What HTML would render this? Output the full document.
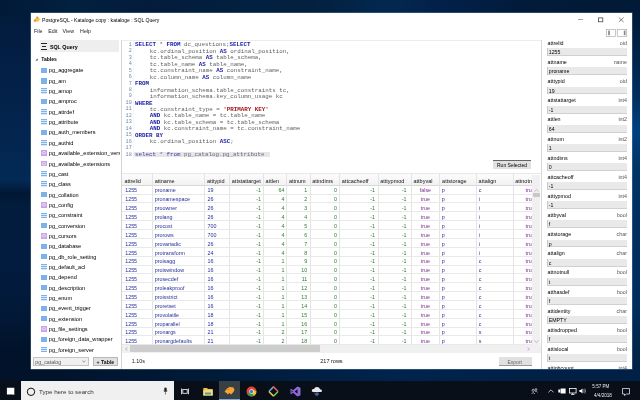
<!DOCTYPE html><html><head><meta charset="utf-8"><style>
html,body{margin:0;padding:0;}
body{width:640px;height:400px;overflow:hidden;position:relative;font-family:'Liberation Sans',sans-serif;}
div{box-sizing:border-box;}
#root{position:absolute;left:0;top:0;width:640px;height:400px;will-change:transform;}
</style></head><body><div id="root">
<div style="position:absolute;left:0;top:0;width:640px;height:381px;background:#021e40"></div>
<div style="position:absolute;left:0;top:0;width:40px;height:381px;background:linear-gradient(180deg,#011a38 0.00%,#031f45 16.27%,#032650 38.32%,#022a55 47.24%,#021f42 49.34%,#011833 50.66%,#021c3c 53.81%,#021c40 67.19%,#021a3a 78.74%,#01132b 92.13%,#01122a 100.00%)"></div>
<div style="position:absolute;left:0;top:0;width:640px;height:16px;background:linear-gradient(90deg,#011a38 0.00%,#02203f 10.94%,#031c3c 23.44%,#02203f 39.06%,#03203f 48.44%,#032850 60.94%,#021f48 70.31%,#011c3a 81.25%,#021a36 93.75%,#021a36 100.00%)"></div>
<div style="position:absolute;left:624px;top:0;width:16px;height:381px;background:linear-gradient(180deg,#001a36 0.00%,#001c3a 5.77%,#00244c 16.27%,#003060 26.25%,#003a75 30.97%,#004080 34.65%,#003a72 38.85%,#003464 44.62%,#00305f 55.64%,#002e5c 79.27%,#002448 92.39%,#002045 100.00%)"></div>
<div style="position:absolute;left:0;top:365px;width:640px;height:16px;background:linear-gradient(90deg,#01122a 0.00%,#01132b 7.81%,#001a38 31.25%,#00244c 62.50%,#002045 85.94%,#002045 100.00%)"></div>
<div style="position:absolute;left:30.5px;top:13.3px;width:601.5px;height:355.7px;background:#fff;box-shadow:0 0 0 0.6px rgba(120,160,200,0.55);"></div>
<svg style="position:absolute;left:32px;top:15px" width="10" height="9" viewBox="32 15 10 9"><path d="M37.3 17.6 L40.8 19.3 L38.5 20.5 Z" fill="#f7cf4a"/><ellipse cx="37.2" cy="19.7" rx="2.1" ry="2.1" fill="#f6c53a"/><circle cx="35" cy="20.6" r="1.3" fill="#e8963a"/><circle cx="37.3" cy="17.4" r="1" fill="#c9864a"/></svg>
<div style="position:absolute;left:42px;top:16.94px;font-size:5.1px;line-height:6.12px;color:#000;font-weight:normal;white-space:pre;">PostgreSQL - Kataloge copy : kataloge : SQL Query</div>
<svg style="position:absolute;left:576px;top:15px" width="50" height="10" viewBox="576 15 50 10"><path d="M578 19.5 L583 19.5" stroke="#666" stroke-width="0.6"/><rect x="598.5" y="17.9" width="4.3" height="3.9" fill="none" stroke="#333" stroke-width="0.7"/><path d="M618.8 17.5 L623.6 22 M623.6 17.5 L618.8 22" stroke="#333" stroke-width="0.6"/></svg>
<div style="position:absolute;left:34px;top:27.82px;font-size:5.3px;line-height:6.36px;color:#222;font-weight:normal;white-space:pre;">File</div>
<div style="position:absolute;left:48.3px;top:27.82px;font-size:5.3px;line-height:6.36px;color:#222;font-weight:normal;white-space:pre;">Edit</div>
<div style="position:absolute;left:62.6px;top:27.82px;font-size:5.3px;line-height:6.36px;color:#222;font-weight:normal;white-space:pre;">View</div>
<div style="position:absolute;left:80.1px;top:27.82px;font-size:5.3px;line-height:6.36px;color:#222;font-weight:normal;white-space:pre;">Help</div>
<svg style="position:absolute;left:600px;top:25px" width="32" height="15" viewBox="600 25 32 15"><rect x="606.5" y="29.5" width="8.8" height="6.8" fill="#fff" stroke="#a0a0a0" stroke-width="0.6"/><rect x="608.2" y="30.6" width="1.7" height="4.6" fill="#888"/><rect x="617.2" y="29.5" width="9.5" height="6.8" fill="#fff" stroke="#a0a0a0" stroke-width="0.6"/><rect x="623.8" y="30.6" width="1.7" height="4.6" fill="#888"/></svg>
<div style="position:absolute;left:40px;top:39.8px;width:79px;height:12.3px;background:#eeeeee;"></div>
<div style="position:absolute;left:40.9px;top:43.2px;width:6.2px;height:0.7px;background:#222;"></div>
<div style="position:absolute;left:42.1px;top:45.8px;width:3.8px;height:0.7px;background:#222;"></div>
<div style="position:absolute;left:40.9px;top:49.1px;width:6.2px;height:0.7px;background:#222;"></div>
<div style="position:absolute;left:49.9px;top:43.69px;font-size:5.35px;line-height:6.42px;color:#000;font-weight:bold;white-space:pre;">SQL Query</div>
<svg style="position:absolute;left:35px;top:58px" width="3" height="3" viewBox="0 0 3 3"><path d="M2.6 0.4 L2.6 2.6 L0.4 2.6 Z" fill="#333"/></svg>
<div style="position:absolute;left:41.2px;top:56.27px;font-size:5.05px;line-height:6.06px;color:#000;font-weight:bold;white-space:pre;">Tables</div>
<div style="position:absolute;left:0;top:0;width:640px;height:400px;clip-path:inset(62px 520px 46px 31px)">
<div style="position:absolute;left:41.2px;top:67.75px;width:5.6px;height:5.5px;background:#7cb2ec;"></div>
<div style="position:absolute;left:48.8px;top:67.44px;font-size:5.6px;line-height:6.72px;color:#000;font-weight:normal;white-space:pre;">pg_aggregate</div>
<div style="position:absolute;left:41.2px;top:78.09px;width:5.6px;height:5.5px;background:#7cb2ec;"></div>
<div style="position:absolute;left:48.8px;top:77.78px;font-size:5.6px;line-height:6.72px;color:#000;font-weight:normal;white-space:pre;">pg_am</div>
<div style="position:absolute;left:41.2px;top:88.43px;width:5.6px;height:5.5px;background:repeating-linear-gradient(180deg,#7cb2ec 0,#7cb2ec 1.1px,#dbe9f8 1.1px,#dbe9f8 1.85px);"></div>
<div style="position:absolute;left:48.8px;top:88.12px;font-size:5.6px;line-height:6.72px;color:#000;font-weight:normal;white-space:pre;">pg_amop</div>
<div style="position:absolute;left:41.2px;top:98.77px;width:5.6px;height:5.5px;background:#7cb2ec;"></div>
<div style="position:absolute;left:48.8px;top:98.46px;font-size:5.6px;line-height:6.72px;color:#000;font-weight:normal;white-space:pre;">pg_amproc</div>
<div style="position:absolute;left:41.2px;top:109.11px;width:5.6px;height:5.5px;background:repeating-linear-gradient(180deg,#7cb2ec 0,#7cb2ec 1.1px,#dbe9f8 1.1px,#dbe9f8 1.85px);"></div>
<div style="position:absolute;left:48.8px;top:108.80px;font-size:5.6px;line-height:6.72px;color:#000;font-weight:normal;white-space:pre;">pg_attrdef</div>
<div style="position:absolute;left:41.2px;top:119.45px;width:5.6px;height:5.5px;background:repeating-linear-gradient(180deg,#7cb2ec 0,#7cb2ec 1.1px,#dbe9f8 1.1px,#dbe9f8 1.85px);"></div>
<div style="position:absolute;left:48.8px;top:119.14px;font-size:5.6px;line-height:6.72px;color:#000;font-weight:normal;white-space:pre;">pg_attribute</div>
<div style="position:absolute;left:41.2px;top:129.79px;width:5.6px;height:5.5px;background:#7cb2ec;"></div>
<div style="position:absolute;left:48.8px;top:129.48px;font-size:5.6px;line-height:6.72px;color:#000;font-weight:normal;white-space:pre;">pg_auth_members</div>
<div style="position:absolute;left:41.2px;top:140.13px;width:5.6px;height:5.5px;background:repeating-linear-gradient(180deg,#7cb2ec 0,#7cb2ec 1.1px,#dbe9f8 1.1px,#dbe9f8 1.85px);"></div>
<div style="position:absolute;left:48.8px;top:139.82px;font-size:5.6px;line-height:6.72px;color:#000;font-weight:normal;white-space:pre;">pg_authid</div>
<div style="position:absolute;left:41.2px;top:150.47px;width:5.6px;height:5.5px;background:#c7a4e8;"></div>
<svg style="position:absolute;left:41.2px;top:150.47px" width="5.6" height="5.5" viewBox="0 0 5.6 5.5"><ellipse cx="2.8" cy="2.75" rx="1.8" ry="1.2" fill="none" stroke="#fff" stroke-width="0.6"/></svg>
<div style="position:absolute;left:48.8px;top:150.16px;font-size:5.6px;line-height:6.72px;color:#000;font-weight:normal;white-space:pre;">pg_available_extension_versions</div>
<div style="position:absolute;left:41.2px;top:160.81px;width:5.6px;height:5.5px;background:#c7a4e8;"></div>
<svg style="position:absolute;left:41.2px;top:160.81px" width="5.6" height="5.5" viewBox="0 0 5.6 5.5"><ellipse cx="2.8" cy="2.75" rx="1.8" ry="1.2" fill="none" stroke="#fff" stroke-width="0.6"/></svg>
<div style="position:absolute;left:48.8px;top:160.50px;font-size:5.6px;line-height:6.72px;color:#000;font-weight:normal;white-space:pre;">pg_available_extensions</div>
<div style="position:absolute;left:41.2px;top:171.15px;width:5.6px;height:5.5px;background:repeating-linear-gradient(180deg,#7cb2ec 0,#7cb2ec 1.1px,#dbe9f8 1.1px,#dbe9f8 1.85px);"></div>
<div style="position:absolute;left:48.8px;top:170.84px;font-size:5.6px;line-height:6.72px;color:#000;font-weight:normal;white-space:pre;">pg_cast</div>
<div style="position:absolute;left:41.2px;top:181.49px;width:5.6px;height:5.5px;background:repeating-linear-gradient(180deg,#7cb2ec 0,#7cb2ec 1.1px,#dbe9f8 1.1px,#dbe9f8 1.85px);"></div>
<div style="position:absolute;left:48.8px;top:181.18px;font-size:5.6px;line-height:6.72px;color:#000;font-weight:normal;white-space:pre;">pg_class</div>
<div style="position:absolute;left:41.2px;top:191.82999999999998px;width:5.6px;height:5.5px;background:#7cb2ec;"></div>
<div style="position:absolute;left:48.8px;top:191.52px;font-size:5.6px;line-height:6.72px;color:#000;font-weight:normal;white-space:pre;">pg_collation</div>
<div style="position:absolute;left:41.2px;top:202.17px;width:5.6px;height:5.5px;background:#c7a4e8;"></div>
<svg style="position:absolute;left:41.2px;top:202.17px" width="5.6" height="5.5" viewBox="0 0 5.6 5.5"><ellipse cx="2.8" cy="2.75" rx="1.8" ry="1.2" fill="none" stroke="#fff" stroke-width="0.6"/></svg>
<div style="position:absolute;left:48.8px;top:201.86px;font-size:5.6px;line-height:6.72px;color:#000;font-weight:normal;white-space:pre;">pg_config</div>
<div style="position:absolute;left:41.2px;top:212.51px;width:5.6px;height:5.5px;background:repeating-linear-gradient(180deg,#7cb2ec 0,#7cb2ec 1.1px,#dbe9f8 1.1px,#dbe9f8 1.85px);"></div>
<div style="position:absolute;left:48.8px;top:212.20px;font-size:5.6px;line-height:6.72px;color:#000;font-weight:normal;white-space:pre;">pg_constraint</div>
<div style="position:absolute;left:41.2px;top:222.85px;width:5.6px;height:5.5px;background:#7cb2ec;"></div>
<div style="position:absolute;left:48.8px;top:222.54px;font-size:5.6px;line-height:6.72px;color:#000;font-weight:normal;white-space:pre;">pg_conversion</div>
<div style="position:absolute;left:41.2px;top:233.19px;width:5.6px;height:5.5px;background:#c7a4e8;"></div>
<svg style="position:absolute;left:41.2px;top:233.19px" width="5.6" height="5.5" viewBox="0 0 5.6 5.5"><ellipse cx="2.8" cy="2.75" rx="1.8" ry="1.2" fill="none" stroke="#fff" stroke-width="0.6"/></svg>
<div style="position:absolute;left:48.8px;top:232.88px;font-size:5.6px;line-height:6.72px;color:#000;font-weight:normal;white-space:pre;">pg_cursors</div>
<div style="position:absolute;left:41.2px;top:243.53px;width:5.6px;height:5.5px;background:#7cb2ec;"></div>
<div style="position:absolute;left:48.8px;top:243.22px;font-size:5.6px;line-height:6.72px;color:#000;font-weight:normal;white-space:pre;">pg_database</div>
<div style="position:absolute;left:41.2px;top:253.87px;width:5.6px;height:5.5px;background:#7cb2ec;"></div>
<div style="position:absolute;left:48.8px;top:253.56px;font-size:5.6px;line-height:6.72px;color:#000;font-weight:normal;white-space:pre;">pg_db_role_setting</div>
<div style="position:absolute;left:41.2px;top:264.21000000000004px;width:5.6px;height:5.5px;background:repeating-linear-gradient(180deg,#7cb2ec 0,#7cb2ec 1.1px,#dbe9f8 1.1px,#dbe9f8 1.85px);"></div>
<div style="position:absolute;left:48.8px;top:263.90px;font-size:5.6px;line-height:6.72px;color:#000;font-weight:normal;white-space:pre;">pg_default_acl</div>
<div style="position:absolute;left:41.2px;top:274.55px;width:5.6px;height:5.5px;background:#7cb2ec;"></div>
<div style="position:absolute;left:48.8px;top:274.24px;font-size:5.6px;line-height:6.72px;color:#000;font-weight:normal;white-space:pre;">pg_depend</div>
<div style="position:absolute;left:41.2px;top:284.89px;width:5.6px;height:5.5px;background:#7cb2ec;"></div>
<div style="position:absolute;left:48.8px;top:284.58px;font-size:5.6px;line-height:6.72px;color:#000;font-weight:normal;white-space:pre;">pg_description</div>
<div style="position:absolute;left:41.2px;top:295.23px;width:5.6px;height:5.5px;background:repeating-linear-gradient(180deg,#7cb2ec 0,#7cb2ec 1.1px,#dbe9f8 1.1px,#dbe9f8 1.85px);"></div>
<div style="position:absolute;left:48.8px;top:294.92px;font-size:5.6px;line-height:6.72px;color:#000;font-weight:normal;white-space:pre;">pg_enum</div>
<div style="position:absolute;left:41.2px;top:305.57px;width:5.6px;height:5.5px;background:#7cb2ec;"></div>
<div style="position:absolute;left:48.8px;top:305.26px;font-size:5.6px;line-height:6.72px;color:#000;font-weight:normal;white-space:pre;">pg_event_trigger</div>
<div style="position:absolute;left:41.2px;top:315.90999999999997px;width:5.6px;height:5.5px;background:#7cb2ec;"></div>
<div style="position:absolute;left:48.8px;top:315.60px;font-size:5.6px;line-height:6.72px;color:#000;font-weight:normal;white-space:pre;">pg_extension</div>
<div style="position:absolute;left:41.2px;top:326.25px;width:5.6px;height:5.5px;background:#c7a4e8;"></div>
<svg style="position:absolute;left:41.2px;top:326.25px" width="5.6" height="5.5" viewBox="0 0 5.6 5.5"><ellipse cx="2.8" cy="2.75" rx="1.8" ry="1.2" fill="none" stroke="#fff" stroke-width="0.6"/></svg>
<div style="position:absolute;left:48.8px;top:325.94px;font-size:5.6px;line-height:6.72px;color:#000;font-weight:normal;white-space:pre;">pg_file_settings</div>
<div style="position:absolute;left:41.2px;top:336.59px;width:5.6px;height:5.5px;background:#7cb2ec;"></div>
<div style="position:absolute;left:48.8px;top:336.28px;font-size:5.6px;line-height:6.72px;color:#000;font-weight:normal;white-space:pre;">pg_foreign_data_wrapper</div>
<div style="position:absolute;left:41.2px;top:346.93px;width:5.6px;height:5.5px;background:repeating-linear-gradient(180deg,#7cb2ec 0,#7cb2ec 1.1px,#dbe9f8 1.1px,#dbe9f8 1.85px);"></div>
<div style="position:absolute;left:48.8px;top:346.62px;font-size:5.6px;line-height:6.72px;color:#000;font-weight:normal;white-space:pre;">pg_foreign_server</div>
</div>
<div style="position:absolute;left:33.2px;top:357.4px;width:55.5px;height:8.4px;border:0.7px solid #c4c4c4;background:#f0f0f0;"></div>
<div style="position:absolute;left:35.3px;top:358.82px;font-size:5.3px;line-height:6.36px;color:#555;font-weight:normal;white-space:pre;">pg_catalog</div>
<svg style="position:absolute;left:82px;top:359.8px" width="4" height="3" viewBox="0 0 4 3"><path d="M0.4 0.6 L2 2.2 L3.6 0.6" fill="none" stroke="#555" stroke-width="0.6"/></svg>
<div style="position:absolute;left:93.2px;top:357.4px;width:24.5px;height:8.4px;border:0.7px solid #b8b8b8;background:#e1e1e1;"></div>
<div style="position:absolute;left:96.6px;top:358.68px;font-size:5.2px;line-height:6.24px;color:#111;font-weight:bold;white-space:pre;">+ Table</div>
<div style="position:absolute;left:121.2px;top:39.5px;width:0.8px;height:329.5px;background:#d4d4d4;"></div>
<div style="position:absolute;left:122px;top:39.5px;width:419px;height:0.7px;background:#ececec;"></div>
<div style="position:absolute;left:541px;top:39.5px;width:0.8px;height:329.5px;background:#d8d8d8;"></div>
<div style="position:absolute;left:133.2px;top:40px;width:0.5px;height:120px;background:#f6f7fb;"></div>
<div style="position:absolute;right:508.2px;top:41.68px;font-size:5.2px;line-height:6.24px;color:#6f8aa8;font-weight:normal;white-space:pre;font-family:'Liberation Mono',monospace;">1</div>
<div style="position:absolute;left:135px;top:41.30px;font-size:5.833px;line-height:7.00px;color:#606060;white-space:pre;font-family:'Liberation Mono',monospace;"><span style="color:#1a1aa6;font-weight:bold">SELECT</span> * <span style="color:#1a1aa6;font-weight:bold">FROM</span> dc_questions;<span style="color:#1a1aa6;font-weight:bold">SELECT</span></div>
<div style="position:absolute;right:508.2px;top:48.15px;font-size:5.2px;line-height:6.24px;color:#6f8aa8;font-weight:normal;white-space:pre;font-family:'Liberation Mono',monospace;">2</div>
<div style="position:absolute;left:135px;top:47.77px;font-size:5.833px;line-height:7.00px;color:#606060;white-space:pre;font-family:'Liberation Mono',monospace;"><span style="display:inline-block;width:14.8px"></span>kc.ordinal_position <span style="color:#1a1aa6;font-weight:bold">AS</span> ordinal_position,</div>
<div style="position:absolute;right:508.2px;top:54.62px;font-size:5.2px;line-height:6.24px;color:#6f8aa8;font-weight:normal;white-space:pre;font-family:'Liberation Mono',monospace;">3</div>
<div style="position:absolute;left:135px;top:54.24px;font-size:5.833px;line-height:7.00px;color:#606060;white-space:pre;font-family:'Liberation Mono',monospace;"><span style="display:inline-block;width:14.8px"></span>tc.table_schema <span style="color:#1a1aa6;font-weight:bold">AS</span> table_schema,</div>
<div style="position:absolute;right:508.2px;top:61.09px;font-size:5.2px;line-height:6.24px;color:#6f8aa8;font-weight:normal;white-space:pre;font-family:'Liberation Mono',monospace;">4</div>
<div style="position:absolute;left:135px;top:60.71px;font-size:5.833px;line-height:7.00px;color:#606060;white-space:pre;font-family:'Liberation Mono',monospace;"><span style="display:inline-block;width:14.8px"></span>tc.table_name <span style="color:#1a1aa6;font-weight:bold">AS</span> table_name,</div>
<div style="position:absolute;right:508.2px;top:67.56px;font-size:5.2px;line-height:6.24px;color:#6f8aa8;font-weight:normal;white-space:pre;font-family:'Liberation Mono',monospace;">5</div>
<div style="position:absolute;left:135px;top:67.18px;font-size:5.833px;line-height:7.00px;color:#606060;white-space:pre;font-family:'Liberation Mono',monospace;"><span style="display:inline-block;width:14.8px"></span>tc.constraint_name <span style="color:#1a1aa6;font-weight:bold">AS</span> constraint_name,</div>
<div style="position:absolute;right:508.2px;top:74.03px;font-size:5.2px;line-height:6.24px;color:#6f8aa8;font-weight:normal;white-space:pre;font-family:'Liberation Mono',monospace;">6</div>
<div style="position:absolute;left:135px;top:73.65px;font-size:5.833px;line-height:7.00px;color:#606060;white-space:pre;font-family:'Liberation Mono',monospace;"><span style="display:inline-block;width:14.8px"></span>kc.column_name <span style="color:#1a1aa6;font-weight:bold">AS</span> column_name</div>
<div style="position:absolute;right:508.2px;top:80.50px;font-size:5.2px;line-height:6.24px;color:#6f8aa8;font-weight:normal;white-space:pre;font-family:'Liberation Mono',monospace;">7</div>
<div style="position:absolute;left:135px;top:80.12px;font-size:5.833px;line-height:7.00px;color:#606060;white-space:pre;font-family:'Liberation Mono',monospace;"><span style="color:#1a1aa6;font-weight:bold">FROM</span></div>
<div style="position:absolute;right:508.2px;top:86.97px;font-size:5.2px;line-height:6.24px;color:#6f8aa8;font-weight:normal;white-space:pre;font-family:'Liberation Mono',monospace;">8</div>
<div style="position:absolute;left:135px;top:86.59px;font-size:5.833px;line-height:7.00px;color:#606060;white-space:pre;font-family:'Liberation Mono',monospace;"><span style="display:inline-block;width:14.8px"></span>information_schema.table_constraints tc,</div>
<div style="position:absolute;right:508.2px;top:93.44px;font-size:5.2px;line-height:6.24px;color:#6f8aa8;font-weight:normal;white-space:pre;font-family:'Liberation Mono',monospace;">9</div>
<div style="position:absolute;left:135px;top:93.06px;font-size:5.833px;line-height:7.00px;color:#606060;white-space:pre;font-family:'Liberation Mono',monospace;"><span style="display:inline-block;width:14.8px"></span>information_schema.key_column_usage kc</div>
<div style="position:absolute;right:508.2px;top:99.91px;font-size:5.2px;line-height:6.24px;color:#6f8aa8;font-weight:normal;white-space:pre;font-family:'Liberation Mono',monospace;">10</div>
<div style="position:absolute;left:135px;top:99.53px;font-size:5.833px;line-height:7.00px;color:#606060;white-space:pre;font-family:'Liberation Mono',monospace;"><span style="color:#1a1aa6;font-weight:bold">WHERE</span></div>
<div style="position:absolute;right:508.2px;top:106.38px;font-size:5.2px;line-height:6.24px;color:#6f8aa8;font-weight:normal;white-space:pre;font-family:'Liberation Mono',monospace;">11</div>
<div style="position:absolute;left:135px;top:106.00px;font-size:5.833px;line-height:7.00px;color:#606060;white-space:pre;font-family:'Liberation Mono',monospace;"><span style="display:inline-block;width:14.8px"></span>tc.constraint_type = <span style="color:#a31515;font-weight:bold">'PRIMARY KEY'</span></div>
<div style="position:absolute;right:508.2px;top:112.85px;font-size:5.2px;line-height:6.24px;color:#6f8aa8;font-weight:normal;white-space:pre;font-family:'Liberation Mono',monospace;">12</div>
<div style="position:absolute;left:135px;top:112.47px;font-size:5.833px;line-height:7.00px;color:#606060;white-space:pre;font-family:'Liberation Mono',monospace;"><span style="display:inline-block;width:14.8px"></span><span style="color:#1a1aa6;font-weight:bold">AND</span> kc.table_name = tc.table_name</div>
<div style="position:absolute;right:508.2px;top:119.32px;font-size:5.2px;line-height:6.24px;color:#6f8aa8;font-weight:normal;white-space:pre;font-family:'Liberation Mono',monospace;">13</div>
<div style="position:absolute;left:135px;top:118.94px;font-size:5.833px;line-height:7.00px;color:#606060;white-space:pre;font-family:'Liberation Mono',monospace;"><span style="display:inline-block;width:14.8px"></span><span style="color:#1a1aa6;font-weight:bold">AND</span> kc.table_schema = tc.table_schema</div>
<div style="position:absolute;right:508.2px;top:125.79px;font-size:5.2px;line-height:6.24px;color:#6f8aa8;font-weight:normal;white-space:pre;font-family:'Liberation Mono',monospace;">14</div>
<div style="position:absolute;left:135px;top:125.41px;font-size:5.833px;line-height:7.00px;color:#606060;white-space:pre;font-family:'Liberation Mono',monospace;"><span style="display:inline-block;width:14.8px"></span><span style="color:#1a1aa6;font-weight:bold">AND</span> kc.constraint_name = tc.constraint_name</div>
<div style="position:absolute;right:508.2px;top:132.26px;font-size:5.2px;line-height:6.24px;color:#6f8aa8;font-weight:normal;white-space:pre;font-family:'Liberation Mono',monospace;">15</div>
<div style="position:absolute;left:135px;top:131.88px;font-size:5.833px;line-height:7.00px;color:#606060;white-space:pre;font-family:'Liberation Mono',monospace;"><span style="color:#1a1aa6;font-weight:bold">ORDER BY</span></div>
<div style="position:absolute;right:508.2px;top:138.73px;font-size:5.2px;line-height:6.24px;color:#6f8aa8;font-weight:normal;white-space:pre;font-family:'Liberation Mono',monospace;">16</div>
<div style="position:absolute;left:135px;top:138.35px;font-size:5.833px;line-height:7.00px;color:#606060;white-space:pre;font-family:'Liberation Mono',monospace;"><span style="display:inline-block;width:14.8px"></span>kc.ordinal_position <span style="color:#1a1aa6;font-weight:bold">ASC</span>;</div>
<div style="position:absolute;right:508.2px;top:145.20px;font-size:5.2px;line-height:6.24px;color:#6f8aa8;font-weight:normal;white-space:pre;font-family:'Liberation Mono',monospace;">17</div>
<div style="position:absolute;right:508.2px;top:151.67px;font-size:5.2px;line-height:6.24px;color:#6f8aa8;font-weight:normal;white-space:pre;font-family:'Liberation Mono',monospace;">18</div>
<div style="position:absolute;left:134.3px;top:151.89px;width:136px;height:5.5px;background:#e6e6e6;"></div>
<div style="position:absolute;left:135px;top:151.29px;font-size:5.833px;line-height:7.00px;color:#606060;white-space:pre;font-family:'Liberation Mono',monospace;"><span style="color:#3a3ab0">select</span><span style="color:#6a6a9a"> * </span><span style="color:#3a3ab0">from</span><span style="color:#6a6a8a"> pg_catalog.pg_attribute</span></div>
<div style="position:absolute;left:493.3px;top:160px;width:37.6px;height:8.6px;background:#e1e1e1;border-top:0.8px solid #666;"></div>
<div style="position:absolute;left:497px;top:162.00px;font-size:5.0px;line-height:6.00px;color:#000;font-weight:normal;white-space:pre;">Run Selected</div>
<div style="position:absolute;left:122px;top:173.2px;width:419px;height:0.7px;background:#e8e8e8;"></div>
<div style="position:absolute;left:122px;top:173.9px;width:410px;height:11.400000000000011px;background:linear-gradient(180deg,#fcfcfc,#f2f2f2);"></div>
<div style="position:absolute;left:122px;top:184.70000000000002px;width:410px;height:0.8px;background:#d8d8d8;"></div>
<div style="position:absolute;left:124.4px;top:177.80px;font-size:5.5px;line-height:6.60px;color:#111;font-weight:normal;white-space:pre;">attrelid</div>
<div style="position:absolute;left:154.70000000000002px;top:177.80px;font-size:5.5px;line-height:6.60px;color:#111;font-weight:normal;white-space:pre;">attname</div>
<div style="position:absolute;left:152.0px;top:174.0px;width:0.7px;height:171.3px;background:#e4e4e4;"></div>
<div style="position:absolute;left:206.9px;top:177.80px;font-size:5.5px;line-height:6.60px;color:#111;font-weight:normal;white-space:pre;">atttypid</div>
<div style="position:absolute;left:204.2px;top:174.0px;width:0.7px;height:171.3px;background:#e4e4e4;"></div>
<div style="position:absolute;left:231.8px;top:177.80px;font-size:5.5px;line-height:6.60px;color:#111;font-weight:normal;white-space:pre;">attstattarget</div>
<div style="position:absolute;left:229.1px;top:174.0px;width:0.7px;height:171.3px;background:#e4e4e4;"></div>
<div style="position:absolute;left:265.59999999999997px;top:177.80px;font-size:5.5px;line-height:6.60px;color:#111;font-weight:normal;white-space:pre;">attlen</div>
<div style="position:absolute;left:262.9px;top:174.0px;width:0.7px;height:171.3px;background:#e4e4e4;"></div>
<div style="position:absolute;left:288.9px;top:177.80px;font-size:5.5px;line-height:6.60px;color:#111;font-weight:normal;white-space:pre;">attnum</div>
<div style="position:absolute;left:286.2px;top:174.0px;width:0.7px;height:171.3px;background:#e4e4e4;"></div>
<div style="position:absolute;left:312.2px;top:177.80px;font-size:5.5px;line-height:6.60px;color:#111;font-weight:normal;white-space:pre;">attndims</div>
<div style="position:absolute;left:309.5px;top:174.0px;width:0.7px;height:171.3px;background:#e4e4e4;"></div>
<div style="position:absolute;left:341.79999999999995px;top:177.80px;font-size:5.5px;line-height:6.60px;color:#111;font-weight:normal;white-space:pre;">attcacheoff</div>
<div style="position:absolute;left:339.09999999999997px;top:174.0px;width:0.7px;height:171.3px;background:#e4e4e4;"></div>
<div style="position:absolute;left:380.2px;top:177.80px;font-size:5.5px;line-height:6.60px;color:#111;font-weight:normal;white-space:pre;">atttypmod</div>
<div style="position:absolute;left:377.5px;top:174.0px;width:0.7px;height:171.3px;background:#e4e4e4;"></div>
<div style="position:absolute;left:413.5px;top:177.80px;font-size:5.5px;line-height:6.60px;color:#111;font-weight:normal;white-space:pre;">attbyval</div>
<div style="position:absolute;left:410.8px;top:174.0px;width:0.7px;height:171.3px;background:#e4e4e4;"></div>
<div style="position:absolute;left:442.09999999999997px;top:177.80px;font-size:5.5px;line-height:6.60px;color:#111;font-weight:normal;white-space:pre;">attstorage</div>
<div style="position:absolute;left:439.4px;top:174.0px;width:0.7px;height:171.3px;background:#e4e4e4;"></div>
<div style="position:absolute;left:478.59999999999997px;top:177.80px;font-size:5.5px;line-height:6.60px;color:#111;font-weight:normal;white-space:pre;">attalign</div>
<div style="position:absolute;left:475.9px;top:174.0px;width:0.7px;height:171.3px;background:#e4e4e4;"></div>
<div style="position:absolute;left:515.1999999999999px;top:177.80px;font-size:5.5px;line-height:6.60px;color:#111;font-weight:normal;white-space:pre;">attnotnull</div>
<div style="position:absolute;left:512.5px;top:174.0px;width:0.7px;height:171.3px;background:#e4e4e4;"></div>
<div style="position:absolute;left:122px;top:193.57000000000002px;width:410px;height:0.7px;background:#e9e9e9;"></div>
<div style="position:absolute;left:125.2px;top:187.47px;font-size:5.35px;line-height:6.42px;color:#26309a;font-weight:normal;white-space:pre;">1255</div>
<div style="position:absolute;left:154.7px;top:187.47px;font-size:5.35px;line-height:6.42px;color:#26309a;font-weight:normal;white-space:pre;">proname</div>
<div style="position:absolute;left:207.6px;top:187.47px;font-size:5.35px;line-height:6.42px;color:#26309a;font-weight:normal;white-space:pre;">19</div>
<div style="position:absolute;right:379.1px;top:187.47px;font-size:5.35px;line-height:6.42px;color:#2e7d32;font-weight:normal;white-space:pre;">-1</div>
<div style="position:absolute;right:355.5px;top:187.47px;font-size:5.35px;line-height:6.42px;color:#2e7d32;font-weight:normal;white-space:pre;">64</div>
<div style="position:absolute;right:332.8px;top:187.47px;font-size:5.35px;line-height:6.42px;color:#2e7d32;font-weight:normal;white-space:pre;">1</div>
<div style="position:absolute;right:303.0px;top:187.47px;font-size:5.35px;line-height:6.42px;color:#2e7d32;font-weight:normal;white-space:pre;">0</div>
<div style="position:absolute;right:265.0px;top:187.47px;font-size:5.35px;line-height:6.42px;color:#2e7d32;font-weight:normal;white-space:pre;">-1</div>
<div style="position:absolute;right:233.39999999999998px;top:187.47px;font-size:5.35px;line-height:6.42px;color:#2e7d32;font-weight:normal;white-space:pre;">-1</div>
<div style="position:absolute;left:411.1px;width:28.599999999999966px;text-align:center;top:187.47px;font-size:5.35px;line-height:6.42px;color:#7a2a90;white-space:pre">false</div>
<div style="position:absolute;left:441.8px;top:187.47px;font-size:5.35px;line-height:6.42px;color:#26309a;font-weight:normal;white-space:pre;">p</div>
<div style="position:absolute;left:478.8px;top:187.47px;font-size:5.35px;line-height:6.42px;color:#26309a;font-weight:normal;white-space:pre;">c</div>
<div style="position:absolute;left:525.6px;top:187.47px;font-size:5.35px;line-height:6.42px;color:#7a2a90;font-weight:normal;white-space:pre;">true</div>
<div style="position:absolute;left:122px;top:202.44000000000003px;width:410px;height:0.7px;background:#e9e9e9;"></div>
<div style="position:absolute;left:125.2px;top:196.34px;font-size:5.35px;line-height:6.42px;color:#26309a;font-weight:normal;white-space:pre;">1255</div>
<div style="position:absolute;left:154.7px;top:196.34px;font-size:5.35px;line-height:6.42px;color:#26309a;font-weight:normal;white-space:pre;">pronamespace</div>
<div style="position:absolute;left:207.6px;top:196.34px;font-size:5.35px;line-height:6.42px;color:#26309a;font-weight:normal;white-space:pre;">26</div>
<div style="position:absolute;right:379.1px;top:196.34px;font-size:5.35px;line-height:6.42px;color:#2e7d32;font-weight:normal;white-space:pre;">-1</div>
<div style="position:absolute;right:355.5px;top:196.34px;font-size:5.35px;line-height:6.42px;color:#2e7d32;font-weight:normal;white-space:pre;">4</div>
<div style="position:absolute;right:332.8px;top:196.34px;font-size:5.35px;line-height:6.42px;color:#2e7d32;font-weight:normal;white-space:pre;">2</div>
<div style="position:absolute;right:303.0px;top:196.34px;font-size:5.35px;line-height:6.42px;color:#2e7d32;font-weight:normal;white-space:pre;">0</div>
<div style="position:absolute;right:265.0px;top:196.34px;font-size:5.35px;line-height:6.42px;color:#2e7d32;font-weight:normal;white-space:pre;">-1</div>
<div style="position:absolute;right:233.39999999999998px;top:196.34px;font-size:5.35px;line-height:6.42px;color:#2e7d32;font-weight:normal;white-space:pre;">-1</div>
<div style="position:absolute;left:411.1px;width:28.599999999999966px;text-align:center;top:196.34px;font-size:5.35px;line-height:6.42px;color:#7a2a90;white-space:pre">true</div>
<div style="position:absolute;left:441.8px;top:196.34px;font-size:5.35px;line-height:6.42px;color:#26309a;font-weight:normal;white-space:pre;">p</div>
<div style="position:absolute;left:478.8px;top:196.34px;font-size:5.35px;line-height:6.42px;color:#26309a;font-weight:normal;white-space:pre;">i</div>
<div style="position:absolute;left:525.6px;top:196.34px;font-size:5.35px;line-height:6.42px;color:#7a2a90;font-weight:normal;white-space:pre;">true</div>
<div style="position:absolute;left:122px;top:211.31000000000003px;width:410px;height:0.7px;background:#e9e9e9;"></div>
<div style="position:absolute;left:125.2px;top:205.22px;font-size:5.35px;line-height:6.42px;color:#26309a;font-weight:normal;white-space:pre;">1255</div>
<div style="position:absolute;left:154.7px;top:205.22px;font-size:5.35px;line-height:6.42px;color:#26309a;font-weight:normal;white-space:pre;">proowner</div>
<div style="position:absolute;left:207.6px;top:205.22px;font-size:5.35px;line-height:6.42px;color:#26309a;font-weight:normal;white-space:pre;">26</div>
<div style="position:absolute;right:379.1px;top:205.22px;font-size:5.35px;line-height:6.42px;color:#2e7d32;font-weight:normal;white-space:pre;">-1</div>
<div style="position:absolute;right:355.5px;top:205.22px;font-size:5.35px;line-height:6.42px;color:#2e7d32;font-weight:normal;white-space:pre;">4</div>
<div style="position:absolute;right:332.8px;top:205.22px;font-size:5.35px;line-height:6.42px;color:#2e7d32;font-weight:normal;white-space:pre;">3</div>
<div style="position:absolute;right:303.0px;top:205.22px;font-size:5.35px;line-height:6.42px;color:#2e7d32;font-weight:normal;white-space:pre;">0</div>
<div style="position:absolute;right:265.0px;top:205.22px;font-size:5.35px;line-height:6.42px;color:#2e7d32;font-weight:normal;white-space:pre;">-1</div>
<div style="position:absolute;right:233.39999999999998px;top:205.22px;font-size:5.35px;line-height:6.42px;color:#2e7d32;font-weight:normal;white-space:pre;">-1</div>
<div style="position:absolute;left:411.1px;width:28.599999999999966px;text-align:center;top:205.22px;font-size:5.35px;line-height:6.42px;color:#7a2a90;white-space:pre">true</div>
<div style="position:absolute;left:441.8px;top:205.22px;font-size:5.35px;line-height:6.42px;color:#26309a;font-weight:normal;white-space:pre;">p</div>
<div style="position:absolute;left:478.8px;top:205.22px;font-size:5.35px;line-height:6.42px;color:#26309a;font-weight:normal;white-space:pre;">i</div>
<div style="position:absolute;left:525.6px;top:205.22px;font-size:5.35px;line-height:6.42px;color:#7a2a90;font-weight:normal;white-space:pre;">true</div>
<div style="position:absolute;left:122px;top:220.18000000000004px;width:410px;height:0.7px;background:#e9e9e9;"></div>
<div style="position:absolute;left:125.2px;top:214.09px;font-size:5.35px;line-height:6.42px;color:#26309a;font-weight:normal;white-space:pre;">1255</div>
<div style="position:absolute;left:154.7px;top:214.09px;font-size:5.35px;line-height:6.42px;color:#26309a;font-weight:normal;white-space:pre;">prolang</div>
<div style="position:absolute;left:207.6px;top:214.09px;font-size:5.35px;line-height:6.42px;color:#26309a;font-weight:normal;white-space:pre;">26</div>
<div style="position:absolute;right:379.1px;top:214.09px;font-size:5.35px;line-height:6.42px;color:#2e7d32;font-weight:normal;white-space:pre;">-1</div>
<div style="position:absolute;right:355.5px;top:214.09px;font-size:5.35px;line-height:6.42px;color:#2e7d32;font-weight:normal;white-space:pre;">4</div>
<div style="position:absolute;right:332.8px;top:214.09px;font-size:5.35px;line-height:6.42px;color:#2e7d32;font-weight:normal;white-space:pre;">4</div>
<div style="position:absolute;right:303.0px;top:214.09px;font-size:5.35px;line-height:6.42px;color:#2e7d32;font-weight:normal;white-space:pre;">0</div>
<div style="position:absolute;right:265.0px;top:214.09px;font-size:5.35px;line-height:6.42px;color:#2e7d32;font-weight:normal;white-space:pre;">-1</div>
<div style="position:absolute;right:233.39999999999998px;top:214.09px;font-size:5.35px;line-height:6.42px;color:#2e7d32;font-weight:normal;white-space:pre;">-1</div>
<div style="position:absolute;left:411.1px;width:28.599999999999966px;text-align:center;top:214.09px;font-size:5.35px;line-height:6.42px;color:#7a2a90;white-space:pre">true</div>
<div style="position:absolute;left:441.8px;top:214.09px;font-size:5.35px;line-height:6.42px;color:#26309a;font-weight:normal;white-space:pre;">p</div>
<div style="position:absolute;left:478.8px;top:214.09px;font-size:5.35px;line-height:6.42px;color:#26309a;font-weight:normal;white-space:pre;">i</div>
<div style="position:absolute;left:525.6px;top:214.09px;font-size:5.35px;line-height:6.42px;color:#7a2a90;font-weight:normal;white-space:pre;">true</div>
<div style="position:absolute;left:122px;top:229.05px;width:410px;height:0.7px;background:#e9e9e9;"></div>
<div style="position:absolute;left:125.2px;top:222.95px;font-size:5.35px;line-height:6.42px;color:#26309a;font-weight:normal;white-space:pre;">1255</div>
<div style="position:absolute;left:154.7px;top:222.95px;font-size:5.35px;line-height:6.42px;color:#26309a;font-weight:normal;white-space:pre;">procost</div>
<div style="position:absolute;left:207.6px;top:222.95px;font-size:5.35px;line-height:6.42px;color:#26309a;font-weight:normal;white-space:pre;">700</div>
<div style="position:absolute;right:379.1px;top:222.95px;font-size:5.35px;line-height:6.42px;color:#2e7d32;font-weight:normal;white-space:pre;">-1</div>
<div style="position:absolute;right:355.5px;top:222.95px;font-size:5.35px;line-height:6.42px;color:#2e7d32;font-weight:normal;white-space:pre;">4</div>
<div style="position:absolute;right:332.8px;top:222.95px;font-size:5.35px;line-height:6.42px;color:#2e7d32;font-weight:normal;white-space:pre;">5</div>
<div style="position:absolute;right:303.0px;top:222.95px;font-size:5.35px;line-height:6.42px;color:#2e7d32;font-weight:normal;white-space:pre;">0</div>
<div style="position:absolute;right:265.0px;top:222.95px;font-size:5.35px;line-height:6.42px;color:#2e7d32;font-weight:normal;white-space:pre;">-1</div>
<div style="position:absolute;right:233.39999999999998px;top:222.95px;font-size:5.35px;line-height:6.42px;color:#2e7d32;font-weight:normal;white-space:pre;">-1</div>
<div style="position:absolute;left:411.1px;width:28.599999999999966px;text-align:center;top:222.95px;font-size:5.35px;line-height:6.42px;color:#7a2a90;white-space:pre">true</div>
<div style="position:absolute;left:441.8px;top:222.95px;font-size:5.35px;line-height:6.42px;color:#26309a;font-weight:normal;white-space:pre;">p</div>
<div style="position:absolute;left:478.8px;top:222.95px;font-size:5.35px;line-height:6.42px;color:#26309a;font-weight:normal;white-space:pre;">i</div>
<div style="position:absolute;left:525.6px;top:222.95px;font-size:5.35px;line-height:6.42px;color:#7a2a90;font-weight:normal;white-space:pre;">true</div>
<div style="position:absolute;left:122px;top:237.92000000000002px;width:410px;height:0.7px;background:#e9e9e9;"></div>
<div style="position:absolute;left:125.2px;top:231.82px;font-size:5.35px;line-height:6.42px;color:#26309a;font-weight:normal;white-space:pre;">1255</div>
<div style="position:absolute;left:154.7px;top:231.82px;font-size:5.35px;line-height:6.42px;color:#26309a;font-weight:normal;white-space:pre;">prorows</div>
<div style="position:absolute;left:207.6px;top:231.82px;font-size:5.35px;line-height:6.42px;color:#26309a;font-weight:normal;white-space:pre;">700</div>
<div style="position:absolute;right:379.1px;top:231.82px;font-size:5.35px;line-height:6.42px;color:#2e7d32;font-weight:normal;white-space:pre;">-1</div>
<div style="position:absolute;right:355.5px;top:231.82px;font-size:5.35px;line-height:6.42px;color:#2e7d32;font-weight:normal;white-space:pre;">4</div>
<div style="position:absolute;right:332.8px;top:231.82px;font-size:5.35px;line-height:6.42px;color:#2e7d32;font-weight:normal;white-space:pre;">6</div>
<div style="position:absolute;right:303.0px;top:231.82px;font-size:5.35px;line-height:6.42px;color:#2e7d32;font-weight:normal;white-space:pre;">0</div>
<div style="position:absolute;right:265.0px;top:231.82px;font-size:5.35px;line-height:6.42px;color:#2e7d32;font-weight:normal;white-space:pre;">-1</div>
<div style="position:absolute;right:233.39999999999998px;top:231.82px;font-size:5.35px;line-height:6.42px;color:#2e7d32;font-weight:normal;white-space:pre;">-1</div>
<div style="position:absolute;left:411.1px;width:28.599999999999966px;text-align:center;top:231.82px;font-size:5.35px;line-height:6.42px;color:#7a2a90;white-space:pre">true</div>
<div style="position:absolute;left:441.8px;top:231.82px;font-size:5.35px;line-height:6.42px;color:#26309a;font-weight:normal;white-space:pre;">p</div>
<div style="position:absolute;left:478.8px;top:231.82px;font-size:5.35px;line-height:6.42px;color:#26309a;font-weight:normal;white-space:pre;">i</div>
<div style="position:absolute;left:525.6px;top:231.82px;font-size:5.35px;line-height:6.42px;color:#7a2a90;font-weight:normal;white-space:pre;">true</div>
<div style="position:absolute;left:122px;top:246.79000000000002px;width:410px;height:0.7px;background:#e9e9e9;"></div>
<div style="position:absolute;left:125.2px;top:240.69px;font-size:5.35px;line-height:6.42px;color:#26309a;font-weight:normal;white-space:pre;">1255</div>
<div style="position:absolute;left:154.7px;top:240.69px;font-size:5.35px;line-height:6.42px;color:#26309a;font-weight:normal;white-space:pre;">provariadic</div>
<div style="position:absolute;left:207.6px;top:240.69px;font-size:5.35px;line-height:6.42px;color:#26309a;font-weight:normal;white-space:pre;">26</div>
<div style="position:absolute;right:379.1px;top:240.69px;font-size:5.35px;line-height:6.42px;color:#2e7d32;font-weight:normal;white-space:pre;">-1</div>
<div style="position:absolute;right:355.5px;top:240.69px;font-size:5.35px;line-height:6.42px;color:#2e7d32;font-weight:normal;white-space:pre;">4</div>
<div style="position:absolute;right:332.8px;top:240.69px;font-size:5.35px;line-height:6.42px;color:#2e7d32;font-weight:normal;white-space:pre;">7</div>
<div style="position:absolute;right:303.0px;top:240.69px;font-size:5.35px;line-height:6.42px;color:#2e7d32;font-weight:normal;white-space:pre;">0</div>
<div style="position:absolute;right:265.0px;top:240.69px;font-size:5.35px;line-height:6.42px;color:#2e7d32;font-weight:normal;white-space:pre;">-1</div>
<div style="position:absolute;right:233.39999999999998px;top:240.69px;font-size:5.35px;line-height:6.42px;color:#2e7d32;font-weight:normal;white-space:pre;">-1</div>
<div style="position:absolute;left:411.1px;width:28.599999999999966px;text-align:center;top:240.69px;font-size:5.35px;line-height:6.42px;color:#7a2a90;white-space:pre">true</div>
<div style="position:absolute;left:441.8px;top:240.69px;font-size:5.35px;line-height:6.42px;color:#26309a;font-weight:normal;white-space:pre;">p</div>
<div style="position:absolute;left:478.8px;top:240.69px;font-size:5.35px;line-height:6.42px;color:#26309a;font-weight:normal;white-space:pre;">i</div>
<div style="position:absolute;left:525.6px;top:240.69px;font-size:5.35px;line-height:6.42px;color:#7a2a90;font-weight:normal;white-space:pre;">true</div>
<div style="position:absolute;left:122px;top:255.66px;width:410px;height:0.7px;background:#e9e9e9;"></div>
<div style="position:absolute;left:125.2px;top:249.56px;font-size:5.35px;line-height:6.42px;color:#26309a;font-weight:normal;white-space:pre;">1255</div>
<div style="position:absolute;left:154.7px;top:249.56px;font-size:5.35px;line-height:6.42px;color:#26309a;font-weight:normal;white-space:pre;">protransform</div>
<div style="position:absolute;left:207.6px;top:249.56px;font-size:5.35px;line-height:6.42px;color:#26309a;font-weight:normal;white-space:pre;">24</div>
<div style="position:absolute;right:379.1px;top:249.56px;font-size:5.35px;line-height:6.42px;color:#2e7d32;font-weight:normal;white-space:pre;">-1</div>
<div style="position:absolute;right:355.5px;top:249.56px;font-size:5.35px;line-height:6.42px;color:#2e7d32;font-weight:normal;white-space:pre;">4</div>
<div style="position:absolute;right:332.8px;top:249.56px;font-size:5.35px;line-height:6.42px;color:#2e7d32;font-weight:normal;white-space:pre;">8</div>
<div style="position:absolute;right:303.0px;top:249.56px;font-size:5.35px;line-height:6.42px;color:#2e7d32;font-weight:normal;white-space:pre;">0</div>
<div style="position:absolute;right:265.0px;top:249.56px;font-size:5.35px;line-height:6.42px;color:#2e7d32;font-weight:normal;white-space:pre;">-1</div>
<div style="position:absolute;right:233.39999999999998px;top:249.56px;font-size:5.35px;line-height:6.42px;color:#2e7d32;font-weight:normal;white-space:pre;">-1</div>
<div style="position:absolute;left:411.1px;width:28.599999999999966px;text-align:center;top:249.56px;font-size:5.35px;line-height:6.42px;color:#7a2a90;white-space:pre">true</div>
<div style="position:absolute;left:441.8px;top:249.56px;font-size:5.35px;line-height:6.42px;color:#26309a;font-weight:normal;white-space:pre;">p</div>
<div style="position:absolute;left:478.8px;top:249.56px;font-size:5.35px;line-height:6.42px;color:#26309a;font-weight:normal;white-space:pre;">i</div>
<div style="position:absolute;left:525.6px;top:249.56px;font-size:5.35px;line-height:6.42px;color:#7a2a90;font-weight:normal;white-space:pre;">true</div>
<div style="position:absolute;left:122px;top:264.53px;width:410px;height:0.7px;background:#e9e9e9;"></div>
<div style="position:absolute;left:125.2px;top:258.44px;font-size:5.35px;line-height:6.42px;color:#26309a;font-weight:normal;white-space:pre;">1255</div>
<div style="position:absolute;left:154.7px;top:258.44px;font-size:5.35px;line-height:6.42px;color:#26309a;font-weight:normal;white-space:pre;">proisagg</div>
<div style="position:absolute;left:207.6px;top:258.44px;font-size:5.35px;line-height:6.42px;color:#26309a;font-weight:normal;white-space:pre;">16</div>
<div style="position:absolute;right:379.1px;top:258.44px;font-size:5.35px;line-height:6.42px;color:#2e7d32;font-weight:normal;white-space:pre;">-1</div>
<div style="position:absolute;right:355.5px;top:258.44px;font-size:5.35px;line-height:6.42px;color:#2e7d32;font-weight:normal;white-space:pre;">1</div>
<div style="position:absolute;right:332.8px;top:258.44px;font-size:5.35px;line-height:6.42px;color:#2e7d32;font-weight:normal;white-space:pre;">9</div>
<div style="position:absolute;right:303.0px;top:258.44px;font-size:5.35px;line-height:6.42px;color:#2e7d32;font-weight:normal;white-space:pre;">0</div>
<div style="position:absolute;right:265.0px;top:258.44px;font-size:5.35px;line-height:6.42px;color:#2e7d32;font-weight:normal;white-space:pre;">-1</div>
<div style="position:absolute;right:233.39999999999998px;top:258.44px;font-size:5.35px;line-height:6.42px;color:#2e7d32;font-weight:normal;white-space:pre;">-1</div>
<div style="position:absolute;left:411.1px;width:28.599999999999966px;text-align:center;top:258.44px;font-size:5.35px;line-height:6.42px;color:#7a2a90;white-space:pre">true</div>
<div style="position:absolute;left:441.8px;top:258.44px;font-size:5.35px;line-height:6.42px;color:#26309a;font-weight:normal;white-space:pre;">p</div>
<div style="position:absolute;left:478.8px;top:258.44px;font-size:5.35px;line-height:6.42px;color:#26309a;font-weight:normal;white-space:pre;">c</div>
<div style="position:absolute;left:525.6px;top:258.44px;font-size:5.35px;line-height:6.42px;color:#7a2a90;font-weight:normal;white-space:pre;">true</div>
<div style="position:absolute;left:122px;top:273.4px;width:410px;height:0.7px;background:#e9e9e9;"></div>
<div style="position:absolute;left:125.2px;top:267.31px;font-size:5.35px;line-height:6.42px;color:#26309a;font-weight:normal;white-space:pre;">1255</div>
<div style="position:absolute;left:154.7px;top:267.31px;font-size:5.35px;line-height:6.42px;color:#26309a;font-weight:normal;white-space:pre;">proiswindow</div>
<div style="position:absolute;left:207.6px;top:267.31px;font-size:5.35px;line-height:6.42px;color:#26309a;font-weight:normal;white-space:pre;">16</div>
<div style="position:absolute;right:379.1px;top:267.31px;font-size:5.35px;line-height:6.42px;color:#2e7d32;font-weight:normal;white-space:pre;">-1</div>
<div style="position:absolute;right:355.5px;top:267.31px;font-size:5.35px;line-height:6.42px;color:#2e7d32;font-weight:normal;white-space:pre;">1</div>
<div style="position:absolute;right:332.8px;top:267.31px;font-size:5.35px;line-height:6.42px;color:#2e7d32;font-weight:normal;white-space:pre;">10</div>
<div style="position:absolute;right:303.0px;top:267.31px;font-size:5.35px;line-height:6.42px;color:#2e7d32;font-weight:normal;white-space:pre;">0</div>
<div style="position:absolute;right:265.0px;top:267.31px;font-size:5.35px;line-height:6.42px;color:#2e7d32;font-weight:normal;white-space:pre;">-1</div>
<div style="position:absolute;right:233.39999999999998px;top:267.31px;font-size:5.35px;line-height:6.42px;color:#2e7d32;font-weight:normal;white-space:pre;">-1</div>
<div style="position:absolute;left:411.1px;width:28.599999999999966px;text-align:center;top:267.31px;font-size:5.35px;line-height:6.42px;color:#7a2a90;white-space:pre">true</div>
<div style="position:absolute;left:441.8px;top:267.31px;font-size:5.35px;line-height:6.42px;color:#26309a;font-weight:normal;white-space:pre;">p</div>
<div style="position:absolute;left:478.8px;top:267.31px;font-size:5.35px;line-height:6.42px;color:#26309a;font-weight:normal;white-space:pre;">c</div>
<div style="position:absolute;left:525.6px;top:267.31px;font-size:5.35px;line-height:6.42px;color:#7a2a90;font-weight:normal;white-space:pre;">true</div>
<div style="position:absolute;left:122px;top:282.27px;width:410px;height:0.7px;background:#e9e9e9;"></div>
<div style="position:absolute;left:125.2px;top:276.18px;font-size:5.35px;line-height:6.42px;color:#26309a;font-weight:normal;white-space:pre;">1255</div>
<div style="position:absolute;left:154.7px;top:276.18px;font-size:5.35px;line-height:6.42px;color:#26309a;font-weight:normal;white-space:pre;">prosecdef</div>
<div style="position:absolute;left:207.6px;top:276.18px;font-size:5.35px;line-height:6.42px;color:#26309a;font-weight:normal;white-space:pre;">16</div>
<div style="position:absolute;right:379.1px;top:276.18px;font-size:5.35px;line-height:6.42px;color:#2e7d32;font-weight:normal;white-space:pre;">-1</div>
<div style="position:absolute;right:355.5px;top:276.18px;font-size:5.35px;line-height:6.42px;color:#2e7d32;font-weight:normal;white-space:pre;">1</div>
<div style="position:absolute;right:332.8px;top:276.18px;font-size:5.35px;line-height:6.42px;color:#2e7d32;font-weight:normal;white-space:pre;">11</div>
<div style="position:absolute;right:303.0px;top:276.18px;font-size:5.35px;line-height:6.42px;color:#2e7d32;font-weight:normal;white-space:pre;">0</div>
<div style="position:absolute;right:265.0px;top:276.18px;font-size:5.35px;line-height:6.42px;color:#2e7d32;font-weight:normal;white-space:pre;">-1</div>
<div style="position:absolute;right:233.39999999999998px;top:276.18px;font-size:5.35px;line-height:6.42px;color:#2e7d32;font-weight:normal;white-space:pre;">-1</div>
<div style="position:absolute;left:411.1px;width:28.599999999999966px;text-align:center;top:276.18px;font-size:5.35px;line-height:6.42px;color:#7a2a90;white-space:pre">true</div>
<div style="position:absolute;left:441.8px;top:276.18px;font-size:5.35px;line-height:6.42px;color:#26309a;font-weight:normal;white-space:pre;">p</div>
<div style="position:absolute;left:478.8px;top:276.18px;font-size:5.35px;line-height:6.42px;color:#26309a;font-weight:normal;white-space:pre;">c</div>
<div style="position:absolute;left:525.6px;top:276.18px;font-size:5.35px;line-height:6.42px;color:#7a2a90;font-weight:normal;white-space:pre;">true</div>
<div style="position:absolute;left:122px;top:291.14px;width:410px;height:0.7px;background:#e9e9e9;"></div>
<div style="position:absolute;left:125.2px;top:285.05px;font-size:5.35px;line-height:6.42px;color:#26309a;font-weight:normal;white-space:pre;">1255</div>
<div style="position:absolute;left:154.7px;top:285.05px;font-size:5.35px;line-height:6.42px;color:#26309a;font-weight:normal;white-space:pre;">proleakproof</div>
<div style="position:absolute;left:207.6px;top:285.05px;font-size:5.35px;line-height:6.42px;color:#26309a;font-weight:normal;white-space:pre;">16</div>
<div style="position:absolute;right:379.1px;top:285.05px;font-size:5.35px;line-height:6.42px;color:#2e7d32;font-weight:normal;white-space:pre;">-1</div>
<div style="position:absolute;right:355.5px;top:285.05px;font-size:5.35px;line-height:6.42px;color:#2e7d32;font-weight:normal;white-space:pre;">1</div>
<div style="position:absolute;right:332.8px;top:285.05px;font-size:5.35px;line-height:6.42px;color:#2e7d32;font-weight:normal;white-space:pre;">12</div>
<div style="position:absolute;right:303.0px;top:285.05px;font-size:5.35px;line-height:6.42px;color:#2e7d32;font-weight:normal;white-space:pre;">0</div>
<div style="position:absolute;right:265.0px;top:285.05px;font-size:5.35px;line-height:6.42px;color:#2e7d32;font-weight:normal;white-space:pre;">-1</div>
<div style="position:absolute;right:233.39999999999998px;top:285.05px;font-size:5.35px;line-height:6.42px;color:#2e7d32;font-weight:normal;white-space:pre;">-1</div>
<div style="position:absolute;left:411.1px;width:28.599999999999966px;text-align:center;top:285.05px;font-size:5.35px;line-height:6.42px;color:#7a2a90;white-space:pre">true</div>
<div style="position:absolute;left:441.8px;top:285.05px;font-size:5.35px;line-height:6.42px;color:#26309a;font-weight:normal;white-space:pre;">p</div>
<div style="position:absolute;left:478.8px;top:285.05px;font-size:5.35px;line-height:6.42px;color:#26309a;font-weight:normal;white-space:pre;">c</div>
<div style="position:absolute;left:525.6px;top:285.05px;font-size:5.35px;line-height:6.42px;color:#7a2a90;font-weight:normal;white-space:pre;">true</div>
<div style="position:absolute;left:122px;top:300.01px;width:410px;height:0.7px;background:#e9e9e9;"></div>
<div style="position:absolute;left:125.2px;top:293.92px;font-size:5.35px;line-height:6.42px;color:#26309a;font-weight:normal;white-space:pre;">1255</div>
<div style="position:absolute;left:154.7px;top:293.92px;font-size:5.35px;line-height:6.42px;color:#26309a;font-weight:normal;white-space:pre;">proisstrict</div>
<div style="position:absolute;left:207.6px;top:293.92px;font-size:5.35px;line-height:6.42px;color:#26309a;font-weight:normal;white-space:pre;">16</div>
<div style="position:absolute;right:379.1px;top:293.92px;font-size:5.35px;line-height:6.42px;color:#2e7d32;font-weight:normal;white-space:pre;">-1</div>
<div style="position:absolute;right:355.5px;top:293.92px;font-size:5.35px;line-height:6.42px;color:#2e7d32;font-weight:normal;white-space:pre;">1</div>
<div style="position:absolute;right:332.8px;top:293.92px;font-size:5.35px;line-height:6.42px;color:#2e7d32;font-weight:normal;white-space:pre;">13</div>
<div style="position:absolute;right:303.0px;top:293.92px;font-size:5.35px;line-height:6.42px;color:#2e7d32;font-weight:normal;white-space:pre;">0</div>
<div style="position:absolute;right:265.0px;top:293.92px;font-size:5.35px;line-height:6.42px;color:#2e7d32;font-weight:normal;white-space:pre;">-1</div>
<div style="position:absolute;right:233.39999999999998px;top:293.92px;font-size:5.35px;line-height:6.42px;color:#2e7d32;font-weight:normal;white-space:pre;">-1</div>
<div style="position:absolute;left:411.1px;width:28.599999999999966px;text-align:center;top:293.92px;font-size:5.35px;line-height:6.42px;color:#7a2a90;white-space:pre">true</div>
<div style="position:absolute;left:441.8px;top:293.92px;font-size:5.35px;line-height:6.42px;color:#26309a;font-weight:normal;white-space:pre;">p</div>
<div style="position:absolute;left:478.8px;top:293.92px;font-size:5.35px;line-height:6.42px;color:#26309a;font-weight:normal;white-space:pre;">c</div>
<div style="position:absolute;left:525.6px;top:293.92px;font-size:5.35px;line-height:6.42px;color:#7a2a90;font-weight:normal;white-space:pre;">true</div>
<div style="position:absolute;left:122px;top:308.88px;width:410px;height:0.7px;background:#e9e9e9;"></div>
<div style="position:absolute;left:125.2px;top:302.79px;font-size:5.35px;line-height:6.42px;color:#26309a;font-weight:normal;white-space:pre;">1255</div>
<div style="position:absolute;left:154.7px;top:302.79px;font-size:5.35px;line-height:6.42px;color:#26309a;font-weight:normal;white-space:pre;">proretset</div>
<div style="position:absolute;left:207.6px;top:302.79px;font-size:5.35px;line-height:6.42px;color:#26309a;font-weight:normal;white-space:pre;">16</div>
<div style="position:absolute;right:379.1px;top:302.79px;font-size:5.35px;line-height:6.42px;color:#2e7d32;font-weight:normal;white-space:pre;">-1</div>
<div style="position:absolute;right:355.5px;top:302.79px;font-size:5.35px;line-height:6.42px;color:#2e7d32;font-weight:normal;white-space:pre;">1</div>
<div style="position:absolute;right:332.8px;top:302.79px;font-size:5.35px;line-height:6.42px;color:#2e7d32;font-weight:normal;white-space:pre;">14</div>
<div style="position:absolute;right:303.0px;top:302.79px;font-size:5.35px;line-height:6.42px;color:#2e7d32;font-weight:normal;white-space:pre;">0</div>
<div style="position:absolute;right:265.0px;top:302.79px;font-size:5.35px;line-height:6.42px;color:#2e7d32;font-weight:normal;white-space:pre;">-1</div>
<div style="position:absolute;right:233.39999999999998px;top:302.79px;font-size:5.35px;line-height:6.42px;color:#2e7d32;font-weight:normal;white-space:pre;">-1</div>
<div style="position:absolute;left:411.1px;width:28.599999999999966px;text-align:center;top:302.79px;font-size:5.35px;line-height:6.42px;color:#7a2a90;white-space:pre">true</div>
<div style="position:absolute;left:441.8px;top:302.79px;font-size:5.35px;line-height:6.42px;color:#26309a;font-weight:normal;white-space:pre;">p</div>
<div style="position:absolute;left:478.8px;top:302.79px;font-size:5.35px;line-height:6.42px;color:#26309a;font-weight:normal;white-space:pre;">c</div>
<div style="position:absolute;left:525.6px;top:302.79px;font-size:5.35px;line-height:6.42px;color:#7a2a90;font-weight:normal;white-space:pre;">true</div>
<div style="position:absolute;left:122px;top:317.75px;width:410px;height:0.7px;background:#e9e9e9;"></div>
<div style="position:absolute;left:125.2px;top:311.66px;font-size:5.35px;line-height:6.42px;color:#26309a;font-weight:normal;white-space:pre;">1255</div>
<div style="position:absolute;left:154.7px;top:311.66px;font-size:5.35px;line-height:6.42px;color:#26309a;font-weight:normal;white-space:pre;">provolatile</div>
<div style="position:absolute;left:207.6px;top:311.66px;font-size:5.35px;line-height:6.42px;color:#26309a;font-weight:normal;white-space:pre;">18</div>
<div style="position:absolute;right:379.1px;top:311.66px;font-size:5.35px;line-height:6.42px;color:#2e7d32;font-weight:normal;white-space:pre;">-1</div>
<div style="position:absolute;right:355.5px;top:311.66px;font-size:5.35px;line-height:6.42px;color:#2e7d32;font-weight:normal;white-space:pre;">1</div>
<div style="position:absolute;right:332.8px;top:311.66px;font-size:5.35px;line-height:6.42px;color:#2e7d32;font-weight:normal;white-space:pre;">15</div>
<div style="position:absolute;right:303.0px;top:311.66px;font-size:5.35px;line-height:6.42px;color:#2e7d32;font-weight:normal;white-space:pre;">0</div>
<div style="position:absolute;right:265.0px;top:311.66px;font-size:5.35px;line-height:6.42px;color:#2e7d32;font-weight:normal;white-space:pre;">-1</div>
<div style="position:absolute;right:233.39999999999998px;top:311.66px;font-size:5.35px;line-height:6.42px;color:#2e7d32;font-weight:normal;white-space:pre;">-1</div>
<div style="position:absolute;left:411.1px;width:28.599999999999966px;text-align:center;top:311.66px;font-size:5.35px;line-height:6.42px;color:#7a2a90;white-space:pre">true</div>
<div style="position:absolute;left:441.8px;top:311.66px;font-size:5.35px;line-height:6.42px;color:#26309a;font-weight:normal;white-space:pre;">p</div>
<div style="position:absolute;left:478.8px;top:311.66px;font-size:5.35px;line-height:6.42px;color:#26309a;font-weight:normal;white-space:pre;">c</div>
<div style="position:absolute;left:525.6px;top:311.66px;font-size:5.35px;line-height:6.42px;color:#7a2a90;font-weight:normal;white-space:pre;">true</div>
<div style="position:absolute;left:122px;top:326.62px;width:410px;height:0.7px;background:#e9e9e9;"></div>
<div style="position:absolute;left:125.2px;top:320.53px;font-size:5.35px;line-height:6.42px;color:#26309a;font-weight:normal;white-space:pre;">1255</div>
<div style="position:absolute;left:154.7px;top:320.53px;font-size:5.35px;line-height:6.42px;color:#26309a;font-weight:normal;white-space:pre;">proparallel</div>
<div style="position:absolute;left:207.6px;top:320.53px;font-size:5.35px;line-height:6.42px;color:#26309a;font-weight:normal;white-space:pre;">18</div>
<div style="position:absolute;right:379.1px;top:320.53px;font-size:5.35px;line-height:6.42px;color:#2e7d32;font-weight:normal;white-space:pre;">-1</div>
<div style="position:absolute;right:355.5px;top:320.53px;font-size:5.35px;line-height:6.42px;color:#2e7d32;font-weight:normal;white-space:pre;">1</div>
<div style="position:absolute;right:332.8px;top:320.53px;font-size:5.35px;line-height:6.42px;color:#2e7d32;font-weight:normal;white-space:pre;">16</div>
<div style="position:absolute;right:303.0px;top:320.53px;font-size:5.35px;line-height:6.42px;color:#2e7d32;font-weight:normal;white-space:pre;">0</div>
<div style="position:absolute;right:265.0px;top:320.53px;font-size:5.35px;line-height:6.42px;color:#2e7d32;font-weight:normal;white-space:pre;">-1</div>
<div style="position:absolute;right:233.39999999999998px;top:320.53px;font-size:5.35px;line-height:6.42px;color:#2e7d32;font-weight:normal;white-space:pre;">-1</div>
<div style="position:absolute;left:411.1px;width:28.599999999999966px;text-align:center;top:320.53px;font-size:5.35px;line-height:6.42px;color:#7a2a90;white-space:pre">true</div>
<div style="position:absolute;left:441.8px;top:320.53px;font-size:5.35px;line-height:6.42px;color:#26309a;font-weight:normal;white-space:pre;">p</div>
<div style="position:absolute;left:478.8px;top:320.53px;font-size:5.35px;line-height:6.42px;color:#26309a;font-weight:normal;white-space:pre;">c</div>
<div style="position:absolute;left:525.6px;top:320.53px;font-size:5.35px;line-height:6.42px;color:#7a2a90;font-weight:normal;white-space:pre;">true</div>
<div style="position:absolute;left:122px;top:335.49px;width:410px;height:0.7px;background:#e9e9e9;"></div>
<div style="position:absolute;left:125.2px;top:329.40px;font-size:5.35px;line-height:6.42px;color:#26309a;font-weight:normal;white-space:pre;">1255</div>
<div style="position:absolute;left:154.7px;top:329.40px;font-size:5.35px;line-height:6.42px;color:#26309a;font-weight:normal;white-space:pre;">pronargs</div>
<div style="position:absolute;left:207.6px;top:329.40px;font-size:5.35px;line-height:6.42px;color:#26309a;font-weight:normal;white-space:pre;">21</div>
<div style="position:absolute;right:379.1px;top:329.40px;font-size:5.35px;line-height:6.42px;color:#2e7d32;font-weight:normal;white-space:pre;">-1</div>
<div style="position:absolute;right:355.5px;top:329.40px;font-size:5.35px;line-height:6.42px;color:#2e7d32;font-weight:normal;white-space:pre;">2</div>
<div style="position:absolute;right:332.8px;top:329.40px;font-size:5.35px;line-height:6.42px;color:#2e7d32;font-weight:normal;white-space:pre;">17</div>
<div style="position:absolute;right:303.0px;top:329.40px;font-size:5.35px;line-height:6.42px;color:#2e7d32;font-weight:normal;white-space:pre;">0</div>
<div style="position:absolute;right:265.0px;top:329.40px;font-size:5.35px;line-height:6.42px;color:#2e7d32;font-weight:normal;white-space:pre;">-1</div>
<div style="position:absolute;right:233.39999999999998px;top:329.40px;font-size:5.35px;line-height:6.42px;color:#2e7d32;font-weight:normal;white-space:pre;">-1</div>
<div style="position:absolute;left:411.1px;width:28.599999999999966px;text-align:center;top:329.40px;font-size:5.35px;line-height:6.42px;color:#7a2a90;white-space:pre">true</div>
<div style="position:absolute;left:441.8px;top:329.40px;font-size:5.35px;line-height:6.42px;color:#26309a;font-weight:normal;white-space:pre;">p</div>
<div style="position:absolute;left:478.8px;top:329.40px;font-size:5.35px;line-height:6.42px;color:#26309a;font-weight:normal;white-space:pre;">s</div>
<div style="position:absolute;left:525.6px;top:329.40px;font-size:5.35px;line-height:6.42px;color:#7a2a90;font-weight:normal;white-space:pre;">true</div>
<div style="position:absolute;left:122px;top:344.36px;width:410px;height:0.7px;background:#e9e9e9;"></div>
<div style="position:absolute;left:125.2px;top:338.27px;font-size:5.35px;line-height:6.42px;color:#26309a;font-weight:normal;white-space:pre;">1255</div>
<div style="position:absolute;left:154.7px;top:338.27px;font-size:5.35px;line-height:6.42px;color:#26309a;font-weight:normal;white-space:pre;">pronargdefaults</div>
<div style="position:absolute;left:207.6px;top:338.27px;font-size:5.35px;line-height:6.42px;color:#26309a;font-weight:normal;white-space:pre;">21</div>
<div style="position:absolute;right:379.1px;top:338.27px;font-size:5.35px;line-height:6.42px;color:#2e7d32;font-weight:normal;white-space:pre;">-1</div>
<div style="position:absolute;right:355.5px;top:338.27px;font-size:5.35px;line-height:6.42px;color:#2e7d32;font-weight:normal;white-space:pre;">2</div>
<div style="position:absolute;right:332.8px;top:338.27px;font-size:5.35px;line-height:6.42px;color:#2e7d32;font-weight:normal;white-space:pre;">18</div>
<div style="position:absolute;right:303.0px;top:338.27px;font-size:5.35px;line-height:6.42px;color:#2e7d32;font-weight:normal;white-space:pre;">0</div>
<div style="position:absolute;right:265.0px;top:338.27px;font-size:5.35px;line-height:6.42px;color:#2e7d32;font-weight:normal;white-space:pre;">-1</div>
<div style="position:absolute;right:233.39999999999998px;top:338.27px;font-size:5.35px;line-height:6.42px;color:#2e7d32;font-weight:normal;white-space:pre;">-1</div>
<div style="position:absolute;left:411.1px;width:28.599999999999966px;text-align:center;top:338.27px;font-size:5.35px;line-height:6.42px;color:#7a2a90;white-space:pre">true</div>
<div style="position:absolute;left:441.8px;top:338.27px;font-size:5.35px;line-height:6.42px;color:#26309a;font-weight:normal;white-space:pre;">p</div>
<div style="position:absolute;left:478.8px;top:338.27px;font-size:5.35px;line-height:6.42px;color:#26309a;font-weight:normal;white-space:pre;">s</div>
<div style="position:absolute;left:525.6px;top:338.27px;font-size:5.35px;line-height:6.42px;color:#7a2a90;font-weight:normal;white-space:pre;">true</div>
<div style="position:absolute;left:532px;top:174.5px;width:8.2px;height:170.3px;background:#f0f0f0;"></div>
<div style="position:absolute;left:532.5px;top:193px;width:7.2px;height:3.7px;background:#c8c8c8;"></div>
<svg style="position:absolute;left:533.5px;top:188.5px" width="5" height="3" viewBox="0 0 5 3"><path d="M0.5 2.5 L2.5 0.5 L4.5 2.5" fill="none" stroke="#888" stroke-width="0.5"/></svg>
<svg style="position:absolute;left:533.5px;top:340px" width="5" height="3" viewBox="0 0 5 3"><path d="M0.5 0.5 L2.5 2.5 L4.5 0.5" fill="none" stroke="#888" stroke-width="0.5"/></svg>
<div style="position:absolute;left:122px;top:344.8px;width:419px;height:7.8px;background:#f0f0f0;"></div>
<div style="position:absolute;left:130.2px;top:345.3px;width:189.5px;height:6.8px;background:#cdcdcd;"></div>
<svg style="position:absolute;left:124.5px;top:346.5px" width="3" height="4" viewBox="0 0 3 4"><path d="M2.5 0.5 L0.5 2 L2.5 3.5" fill="none" stroke="#888" stroke-width="0.5"/></svg>
<svg style="position:absolute;left:526.5px;top:346.5px" width="3" height="4" viewBox="0 0 3 4"><path d="M0.5 0.5 L2.5 2 L0.5 3.5" fill="none" stroke="#888" stroke-width="0.5"/></svg>
<div style="position:absolute;left:131.7px;top:358.06px;font-size:5.4px;line-height:6.48px;color:#222;font-weight:normal;white-space:pre;">1.10s</div>
<div style="position:absolute;left:320.3px;top:358.00px;font-size:5.5px;line-height:6.60px;color:#111;font-weight:normal;white-space:pre;">217 rows</div>
<div style="position:absolute;left:499px;top:357.3px;width:32.7px;height:8.3px;background:#e1e1e1;border-bottom:0.8px solid #999;"></div>
<div style="position:absolute;left:507.5px;top:358.50px;font-size:5.0px;line-height:6.00px;color:#666;font-weight:normal;white-space:pre;">Export</div>
<div style="position:absolute;left:0;top:0;width:640px;height:400px;clip-path:inset(38px 8px 31px 542px)">
<div style="position:absolute;left:547.5px;top:39.89px;font-size:5.35px;line-height:6.42px;color:#000;font-weight:normal;white-space:pre;">attrelid</div>
<div style="position:absolute;right:13px;top:39.89px;font-size:5.35px;line-height:6.42px;color:#555;font-weight:normal;white-space:pre;">oid</div>
<div style="position:absolute;left:547px;top:48.300000000000004px;width:80px;height:7.9px;background:#e9e9e9;border-left:0.6px solid #c8c8c8;border-bottom:0.6px solid #d0d0d0;"></div>
<div style="position:absolute;left:548.8px;top:49.28px;font-size:5.2px;line-height:6.24px;color:#000;font-weight:normal;white-space:pre;">1255</div>
<div style="position:absolute;left:547.5px;top:59.02px;font-size:5.35px;line-height:6.42px;color:#000;font-weight:normal;white-space:pre;">attname</div>
<div style="position:absolute;right:13px;top:59.02px;font-size:5.35px;line-height:6.42px;color:#555;font-weight:normal;white-space:pre;">name</div>
<div style="position:absolute;left:547px;top:67.43px;width:80px;height:7.9px;background:#e9e9e9;border-left:0.6px solid #c8c8c8;border-bottom:0.6px solid #d0d0d0;"></div>
<div style="position:absolute;left:548.8px;top:68.41px;font-size:5.2px;line-height:6.24px;color:#000;font-weight:normal;white-space:pre;">proname</div>
<div style="position:absolute;left:547.5px;top:78.15px;font-size:5.35px;line-height:6.42px;color:#000;font-weight:normal;white-space:pre;">atttypid</div>
<div style="position:absolute;right:13px;top:78.15px;font-size:5.35px;line-height:6.42px;color:#555;font-weight:normal;white-space:pre;">oid</div>
<div style="position:absolute;left:547px;top:86.56px;width:80px;height:7.9px;background:#e9e9e9;border-left:0.6px solid #c8c8c8;border-bottom:0.6px solid #d0d0d0;"></div>
<div style="position:absolute;left:548.8px;top:87.54px;font-size:5.2px;line-height:6.24px;color:#000;font-weight:normal;white-space:pre;">19</div>
<div style="position:absolute;left:547.5px;top:97.28px;font-size:5.35px;line-height:6.42px;color:#000;font-weight:normal;white-space:pre;">attstattarget</div>
<div style="position:absolute;right:13px;top:97.28px;font-size:5.35px;line-height:6.42px;color:#555;font-weight:normal;white-space:pre;">int4</div>
<div style="position:absolute;left:547px;top:105.69000000000001px;width:80px;height:7.9px;background:#e9e9e9;border-left:0.6px solid #c8c8c8;border-bottom:0.6px solid #d0d0d0;"></div>
<div style="position:absolute;left:548.8px;top:106.67px;font-size:5.2px;line-height:6.24px;color:#000;font-weight:normal;white-space:pre;">-1</div>
<div style="position:absolute;left:547.5px;top:116.41px;font-size:5.35px;line-height:6.42px;color:#000;font-weight:normal;white-space:pre;">attlen</div>
<div style="position:absolute;right:13px;top:116.41px;font-size:5.35px;line-height:6.42px;color:#555;font-weight:normal;white-space:pre;">int2</div>
<div style="position:absolute;left:547px;top:124.82000000000001px;width:80px;height:7.9px;background:#e9e9e9;border-left:0.6px solid #c8c8c8;border-bottom:0.6px solid #d0d0d0;"></div>
<div style="position:absolute;left:548.8px;top:125.80px;font-size:5.2px;line-height:6.24px;color:#000;font-weight:normal;white-space:pre;">64</div>
<div style="position:absolute;left:547.5px;top:135.54px;font-size:5.35px;line-height:6.42px;color:#000;font-weight:normal;white-space:pre;">attnum</div>
<div style="position:absolute;right:13px;top:135.54px;font-size:5.35px;line-height:6.42px;color:#555;font-weight:normal;white-space:pre;">int2</div>
<div style="position:absolute;left:547px;top:143.95px;width:80px;height:7.9px;background:#e9e9e9;border-left:0.6px solid #c8c8c8;border-bottom:0.6px solid #d0d0d0;"></div>
<div style="position:absolute;left:548.8px;top:144.93px;font-size:5.2px;line-height:6.24px;color:#000;font-weight:normal;white-space:pre;">1</div>
<div style="position:absolute;left:547.5px;top:154.67px;font-size:5.35px;line-height:6.42px;color:#000;font-weight:normal;white-space:pre;">attndims</div>
<div style="position:absolute;right:13px;top:154.67px;font-size:5.35px;line-height:6.42px;color:#555;font-weight:normal;white-space:pre;">int4</div>
<div style="position:absolute;left:547px;top:163.07999999999998px;width:80px;height:7.9px;background:#e9e9e9;border-left:0.6px solid #c8c8c8;border-bottom:0.6px solid #d0d0d0;"></div>
<div style="position:absolute;left:548.8px;top:164.06px;font-size:5.2px;line-height:6.24px;color:#000;font-weight:normal;white-space:pre;">0</div>
<div style="position:absolute;left:547.5px;top:173.80px;font-size:5.35px;line-height:6.42px;color:#000;font-weight:normal;white-space:pre;">attcacheoff</div>
<div style="position:absolute;right:13px;top:173.80px;font-size:5.35px;line-height:6.42px;color:#555;font-weight:normal;white-space:pre;">int4</div>
<div style="position:absolute;left:547px;top:182.20999999999998px;width:80px;height:7.9px;background:#e9e9e9;border-left:0.6px solid #c8c8c8;border-bottom:0.6px solid #d0d0d0;"></div>
<div style="position:absolute;left:548.8px;top:183.19px;font-size:5.2px;line-height:6.24px;color:#000;font-weight:normal;white-space:pre;">-1</div>
<div style="position:absolute;left:547.5px;top:192.93px;font-size:5.35px;line-height:6.42px;color:#000;font-weight:normal;white-space:pre;">atttypmod</div>
<div style="position:absolute;right:13px;top:192.93px;font-size:5.35px;line-height:6.42px;color:#555;font-weight:normal;white-space:pre;">int4</div>
<div style="position:absolute;left:547px;top:201.33999999999997px;width:80px;height:7.9px;background:#e9e9e9;border-left:0.6px solid #c8c8c8;border-bottom:0.6px solid #d0d0d0;"></div>
<div style="position:absolute;left:548.8px;top:202.32px;font-size:5.2px;line-height:6.24px;color:#000;font-weight:normal;white-space:pre;">-1</div>
<div style="position:absolute;left:547.5px;top:212.06px;font-size:5.35px;line-height:6.42px;color:#000;font-weight:normal;white-space:pre;">attbyval</div>
<div style="position:absolute;right:13px;top:212.06px;font-size:5.35px;line-height:6.42px;color:#555;font-weight:normal;white-space:pre;">bool</div>
<div style="position:absolute;left:547px;top:220.46999999999997px;width:80px;height:7.9px;background:#e9e9e9;border-left:0.6px solid #c8c8c8;border-bottom:0.6px solid #d0d0d0;"></div>
<div style="position:absolute;left:548.8px;top:221.45px;font-size:5.2px;line-height:6.24px;color:#000;font-weight:normal;white-space:pre;">f</div>
<div style="position:absolute;left:547.5px;top:231.19px;font-size:5.35px;line-height:6.42px;color:#000;font-weight:normal;white-space:pre;">attstorage</div>
<div style="position:absolute;right:13px;top:231.19px;font-size:5.35px;line-height:6.42px;color:#555;font-weight:normal;white-space:pre;">char</div>
<div style="position:absolute;left:547px;top:239.59999999999997px;width:80px;height:7.9px;background:#e9e9e9;border-left:0.6px solid #c8c8c8;border-bottom:0.6px solid #d0d0d0;"></div>
<div style="position:absolute;left:548.8px;top:240.58px;font-size:5.2px;line-height:6.24px;color:#000;font-weight:normal;white-space:pre;">p</div>
<div style="position:absolute;left:547.5px;top:250.32px;font-size:5.35px;line-height:6.42px;color:#000;font-weight:normal;white-space:pre;">attalign</div>
<div style="position:absolute;right:13px;top:250.32px;font-size:5.35px;line-height:6.42px;color:#555;font-weight:normal;white-space:pre;">char</div>
<div style="position:absolute;left:547px;top:258.72999999999996px;width:80px;height:7.9px;background:#e9e9e9;border-left:0.6px solid #c8c8c8;border-bottom:0.6px solid #d0d0d0;"></div>
<div style="position:absolute;left:548.8px;top:259.71px;font-size:5.2px;line-height:6.24px;color:#000;font-weight:normal;white-space:pre;">c</div>
<div style="position:absolute;left:547.5px;top:269.45px;font-size:5.35px;line-height:6.42px;color:#000;font-weight:normal;white-space:pre;">attnotnull</div>
<div style="position:absolute;right:13px;top:269.45px;font-size:5.35px;line-height:6.42px;color:#555;font-weight:normal;white-space:pre;">bool</div>
<div style="position:absolute;left:547px;top:277.86px;width:80px;height:7.9px;background:#e9e9e9;border-left:0.6px solid #c8c8c8;border-bottom:0.6px solid #d0d0d0;"></div>
<div style="position:absolute;left:548.8px;top:278.84px;font-size:5.2px;line-height:6.24px;color:#000;font-weight:normal;white-space:pre;">t</div>
<div style="position:absolute;left:547.5px;top:288.58px;font-size:5.35px;line-height:6.42px;color:#000;font-weight:normal;white-space:pre;">atthasdef</div>
<div style="position:absolute;right:13px;top:288.58px;font-size:5.35px;line-height:6.42px;color:#555;font-weight:normal;white-space:pre;">bool</div>
<div style="position:absolute;left:547px;top:296.99px;width:80px;height:7.9px;background:#e9e9e9;border-left:0.6px solid #c8c8c8;border-bottom:0.6px solid #d0d0d0;"></div>
<div style="position:absolute;left:548.8px;top:297.97px;font-size:5.2px;line-height:6.24px;color:#000;font-weight:normal;white-space:pre;">f</div>
<div style="position:absolute;left:547.5px;top:307.71px;font-size:5.35px;line-height:6.42px;color:#000;font-weight:normal;white-space:pre;">attidentity</div>
<div style="position:absolute;right:13px;top:307.71px;font-size:5.35px;line-height:6.42px;color:#555;font-weight:normal;white-space:pre;">char</div>
<div style="position:absolute;left:547px;top:316.12px;width:80px;height:7.9px;background:#e9e9e9;border-left:0.6px solid #c8c8c8;border-bottom:0.6px solid #d0d0d0;"></div>
<div style="position:absolute;left:548.8px;top:317.10px;font-size:5.2px;line-height:6.24px;color:#000;font-weight:normal;white-space:pre;">EMPTY</div>
<div style="position:absolute;left:547.5px;top:326.84px;font-size:5.35px;line-height:6.42px;color:#000;font-weight:normal;white-space:pre;">attisdropped</div>
<div style="position:absolute;right:13px;top:326.84px;font-size:5.35px;line-height:6.42px;color:#555;font-weight:normal;white-space:pre;">bool</div>
<div style="position:absolute;left:547px;top:335.25px;width:80px;height:7.9px;background:#e9e9e9;border-left:0.6px solid #c8c8c8;border-bottom:0.6px solid #d0d0d0;"></div>
<div style="position:absolute;left:548.8px;top:336.23px;font-size:5.2px;line-height:6.24px;color:#000;font-weight:normal;white-space:pre;">f</div>
<div style="position:absolute;left:547.5px;top:345.97px;font-size:5.35px;line-height:6.42px;color:#000;font-weight:normal;white-space:pre;">attislocal</div>
<div style="position:absolute;right:13px;top:345.97px;font-size:5.35px;line-height:6.42px;color:#555;font-weight:normal;white-space:pre;">bool</div>
<div style="position:absolute;left:547px;top:354.38px;width:80px;height:7.9px;background:#e9e9e9;border-left:0.6px solid #c8c8c8;border-bottom:0.6px solid #d0d0d0;"></div>
<div style="position:absolute;left:548.8px;top:355.36px;font-size:5.2px;line-height:6.24px;color:#000;font-weight:normal;white-space:pre;">t</div>
<div style="position:absolute;left:547.5px;top:365.10px;font-size:5.35px;line-height:6.42px;color:#000;font-weight:normal;white-space:pre;">attinhcount</div>
<div style="position:absolute;right:13px;top:365.10px;font-size:5.35px;line-height:6.42px;color:#555;font-weight:normal;white-space:pre;">int4</div>
<div style="position:absolute;left:547px;top:373.51px;width:80px;height:7.9px;background:#e9e9e9;border-left:0.6px solid #c8c8c8;border-bottom:0.6px solid #d0d0d0;"></div>
<div style="position:absolute;left:548.8px;top:374.49px;font-size:5.2px;line-height:6.24px;color:#000;font-weight:normal;white-space:pre;">0</div>
</div>
<div style="position:absolute;left:0px;top:381.3px;width:640px;height:18.7px;background:#090f19;"></div>
<svg style="position:absolute;left:6px;top:387px" width="10" height="9" viewBox="6 387 10 9"><path d="M6.9 387.8 L14.3 387.7 L14.3 395 L13.2 394.4 L6.9 394.4 Z" fill="#fff"/></svg>
<div style="position:absolute;left:20.7px;top:381px;width:153px;height:19px;background:#f0f0f0;"></div>
<svg style="position:absolute;left:25.5px;top:387px" width="10" height="10" viewBox="0 0 10 10"><circle cx="5" cy="4.8" r="3.7" fill="none" stroke="#111" stroke-width="1"/></svg>
<div style="position:absolute;left:39px;top:388.08px;font-size:6.2px;line-height:7.44px;color:#333;font-weight:normal;white-space:pre;">Type here to search</div>
<svg style="position:absolute;left:163px;top:387px" width="5" height="8" viewBox="0 0 5 8"><rect x="1.3" y="0.5" width="2.4" height="4.2" rx="1.2" fill="#222"/><path d="M0.6 3.8 Q2.5 6.2 4.4 3.8 M2.5 5.5 L2.5 7.4" stroke="#222" stroke-width="0.6" fill="none"/></svg>
<svg style="position:absolute;left:180.5px;top:387.5px" width="8" height="7" viewBox="0 0 8 7"><rect x="1.8" y="1.5" width="4.4" height="3.8" fill="none" stroke="#fff" stroke-width="0.8"/><path d="M0.5 0.5 L0.5 6.3 M7.5 0.5 L7.5 6.3" stroke="#fff" stroke-width="0.8"/></svg>
<svg style="position:absolute;left:202.5px;top:386.5px" width="10" height="9" viewBox="0 0 10 9"><path d="M0.3 1 L4 1 L5 2 L9.7 2 L9.7 8.5 L0.3 8.5 Z" fill="#f3c24e"/><rect x="0.3" y="3.2" width="9.4" height="5.3" fill="#fbd978"/><rect x="2" y="5.5" width="6" height="2" fill="#3aa6b8"/></svg>
<div style="position:absolute;left:218.8px;top:381px;width:21px;height:19px;background:#3a3f46;"></div>
<div style="position:absolute;left:218.8px;top:399px;width:21px;height:1px;background:#7aa7d8;"></div>
<svg style="position:absolute;left:223.5px;top:386px" width="11" height="9" viewBox="0 0 11 9"><path d="M0.5 6 L2.5 3 L5.5 1 L9.5 1.5 L10.5 4 L9 6.5 L7 8.5 L5.5 7 L3.5 8.5 L2.5 6.8 Z" fill="#f5a630"/><path d="M3 4 L6 3" stroke="#c97a10" stroke-width="0.5"/></svg>
<svg style="position:absolute;left:246px;top:386px" width="11" height="11" viewBox="0 0 11 11"><circle cx="5.5" cy="5.5" r="5" fill="#e04434"/><path d="M5.5 5.5 L1.2 8 A5 5 0 0 0 7.8 9.9 Z" fill="#2e9e4a"/><path d="M5.5 5.5 L7.8 9.9 A5 5 0 0 0 10.5 5.5 L5.5 3 Z" fill="#f7c320"/><circle cx="5.5" cy="5.5" r="2.2" fill="#fff"/><circle cx="5.5" cy="5.5" r="1.7" fill="#3b7be8"/></svg>
<svg style="position:absolute;left:267.5px;top:386px" width="11" height="11" viewBox="0 0 11 11"><path d="M0.9 5.5 L5.5 0.9" stroke="#5ab4ee" stroke-width="1.5"/><path d="M5.5 0.9 L10.1 5.5" stroke="#f05a4a" stroke-width="1.5"/><path d="M10.1 5.5 L5.5 10.1" stroke="#6cc86a" stroke-width="1.5"/><path d="M5.5 10.1 L0.9 5.5" stroke="#f3c838" stroke-width="1.5"/><circle cx="5.5" cy="1.2" r="0.9" fill="#e8584a"/></svg>
<svg style="position:absolute;left:289.5px;top:386px" width="11" height="11" viewBox="0 0 11 11"><path d="M7.5 0.5 L10.5 1.8 L10.5 9.2 L7.5 10.5 L3 6.8 L1.2 8.2 L0.5 7.8 L0.5 3.2 L1.2 2.8 L3 4.2 Z M7.5 3.2 L4.6 5.5 L7.5 7.8 Z M1.6 4.2 L1.6 6.8 L2.9 5.5 Z" fill="#8e6ad6" fill-rule="evenodd"/></svg>
<svg style="position:absolute;left:311px;top:386px" width="12" height="11" viewBox="0 0 12 11"><path d="M2 6 Q0.5 6 0.8 4.3 Q1.2 2.8 3 3 Q3.8 0.8 6.2 1 Q8.8 1.2 9 3.2 Q11.2 3.3 11 5 Q10.8 6.2 9.5 6 Z" fill="#e8e8ee"/><path d="M6 6 L6 10 M4 8 L8 8" stroke="#3b8fd8" stroke-width="1"/><path d="M3 6 L5 10" stroke="#c33" stroke-width="0.6"/></svg>
<svg style="position:absolute;left:531px;top:388px" width="7" height="6" viewBox="0 0 7 6"><circle cx="2.2" cy="2.3" r="1.1" fill="none" stroke="#fff" stroke-width="0.6"/><circle cx="5" cy="1.5" r="0.9" fill="none" stroke="#fff" stroke-width="0.6"/><path d="M0.5 5.8 Q2.2 3.4 3.9 5.8 M4 3.3 Q5.3 2.6 6.6 4.3" stroke="#fff" stroke-width="0.6" fill="none"/></svg>
<svg style="position:absolute;left:548px;top:389px" width="6" height="4" viewBox="0 0 6 4"><path d="M0.4 3.4 L3 0.8 L5.6 3.4" stroke="#fff" stroke-width="0.7" fill="none"/></svg>
<svg style="position:absolute;left:558px;top:388px" width="8" height="6" viewBox="0 0 8 6"><rect x="0.3" y="1.5" width="2" height="3" fill="#fff"/><rect x="2.6" y="0.5" width="5" height="5" fill="#fff"/></svg>
<svg style="position:absolute;left:569px;top:387.5px" width="7.5" height="7" viewBox="0 0 7.5 7"><rect x="0.4" y="0.4" width="6.7" height="4.6" fill="none" stroke="#fff" stroke-width="0.8"/><path d="M3.75 5 L3.75 6.6 M2 6.6 L5.5 6.6" stroke="#fff" stroke-width="0.8"/></svg>
<svg style="position:absolute;left:579px;top:388px" width="7" height="6" viewBox="0 0 7 6"><path d="M0.4 2 L1.8 2 L3.5 0.4 L3.5 5.6 L1.8 4 L0.4 4 Z" fill="#fff"/><path d="M4.6 1.3 Q5.6 3 4.6 4.7 M5.8 0.6 Q7.2 3 5.8 5.4" stroke="#fff" stroke-width="0.5" fill="none"/></svg>
<div style="position:absolute;left:592.3px;top:383.74px;font-size:4.6px;line-height:5.52px;color:#e8e8e8;font-weight:normal;white-space:pre;">5:57 PM</div>
<div style="position:absolute;left:594px;top:392.54px;font-size:4.6px;line-height:5.52px;color:#e8e8e8;font-weight:normal;white-space:pre;">4/4/2018</div>
<svg style="position:absolute;left:622px;top:387.5px" width="8" height="8" viewBox="0 0 8 8"><path d="M0.5 0.5 L7.5 0.5 L7.5 6 L4.5 6 L2.5 7.5 L2.5 6 L0.5 6 Z" fill="none" stroke="#fff" stroke-width="0.7"/></svg>
</div></body></html>
